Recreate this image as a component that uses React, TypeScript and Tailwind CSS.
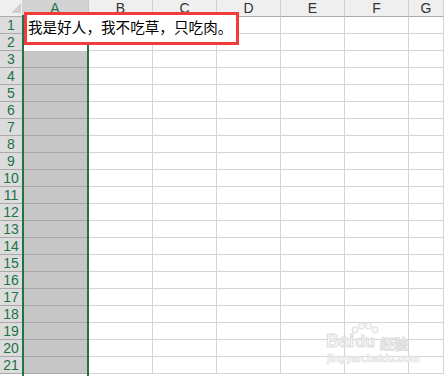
import React from "react";

const cols = ["A", "B", "C", "D", "E", "F", "G"];
const rows = Array.from({ length: 21 }, (_, i) => i + 1);

const wm = "font-bold leading-none text-[#f8f8f8] [-webkit-text-stroke:1px_#dddddd]";

export default function App() {
  return (
    <div className="relative w-[444px] h-[376px] overflow-hidden bg-white font-['Liberation_Sans',sans-serif]">
      <div className="grid grid-cols-[22px_67px_64px_64px_64px_64px_64px_1fr]">
        {/* header row */}
        <div className="h-[17px] bg-[#efefef] border-b border-[#ababab] flex items-end justify-end pr-[1px] pb-[3px]">
          <svg width="10" height="10" viewBox="0 0 10 10">
            <polygon points="10,0 10,10 0,10" fill="#cfcfcf" />
          </svg>
        </div>
        {cols.map((c) =>
          c === "A" ? (
            <div
              key={c}
              className="h-[17px] bg-[#d3d3d3] border-b-2 border-[#217346] border-r border-r-[#c8c8c8] flex items-center justify-center text-[14px] leading-none text-[#217346]"
            >
              {c}
            </div>
          ) : (
            <div
              key={c}
              className="h-[17px] bg-[#efefef] border-b border-[#ababab] border-r border-r-[#d0d0d0] flex items-center justify-center text-[14px] leading-none text-[#333333]"
            >
              {c}
            </div>
          )
        )}
        {rows.map((r) => (
          <React.Fragment key={r}>
            <div className="h-[17px] bg-[#dcdcdc] border-b border-[#a9a9a9] flex items-center justify-center text-[14px] leading-none text-[#217346]">
              {r}
            </div>
            <div
              className={
                r <= 2
                  ? "h-[17px] bg-white"
                  : "h-[17px] bg-[#c6c6c6] border-b border-[#a9a9a9]"
              }
            />
            {cols.slice(1).map((c) => (
              <div key={c} className="h-[17px] border-r border-b border-[#d4d4d4]" />
            ))}
          </React.Fragment>
        ))}
      </div>

      {/* column A selection border */}
      <div className="absolute left-[22px] top-[17px] w-[67px] bottom-0 border-x-2 border-[#217346]" />

      {/* red annotation box with cell text */}
      <div className="absolute left-[24px] top-[12px] w-[215px] h-[33px] border-[3px] border-[#f23b3b] bg-white pl-[1px] pt-[4px] text-[14.6px] leading-[15px] text-black whitespace-nowrap font-['Noto_Sans_CJK_SC',sans-serif]">
        我是好人，我不吃草，只吃肉。
      </div>

      {/* watermark (logo) */}
      <div className="absolute left-[326px] top-[322px] flex flex-col items-start gap-[3px] pointer-events-none">
        <div className="flex items-end">
          <span className={`text-[18px] ${wm}`}>Bai</span>
          <div className="flex flex-col items-center -ml-[3px]">
            <svg width="28" height="12" viewBox="0 0 28 12">
              <g fill="#f8f8f8" stroke="#dddddd" strokeWidth="1">
                <ellipse cx="4" cy="8" rx="3" ry="3.2" />
                <ellipse cx="10.5" cy="4" rx="3" ry="3.2" />
                <ellipse cx="17.5" cy="4" rx="3" ry="3.2" />
                <ellipse cx="24" cy="8" rx="3" ry="3.2" />
              </g>
            </svg>
            <span className={`text-[16px] ${wm}`}>du</span>
          </div>
          <span className={`ml-[1px] text-[14px] font-['Noto_Sans_CJK_SC',sans-serif] ${wm}`}>经验</span>
        </div>
        <span className="ml-[1px] text-[10.5px] font-bold leading-none text-[#f8f8f8] [-webkit-text-stroke:0.6px_#e0e0e0] whitespace-nowrap">
          jingyan.baidu.com
        </span>
      </div>
    </div>
  );
}
